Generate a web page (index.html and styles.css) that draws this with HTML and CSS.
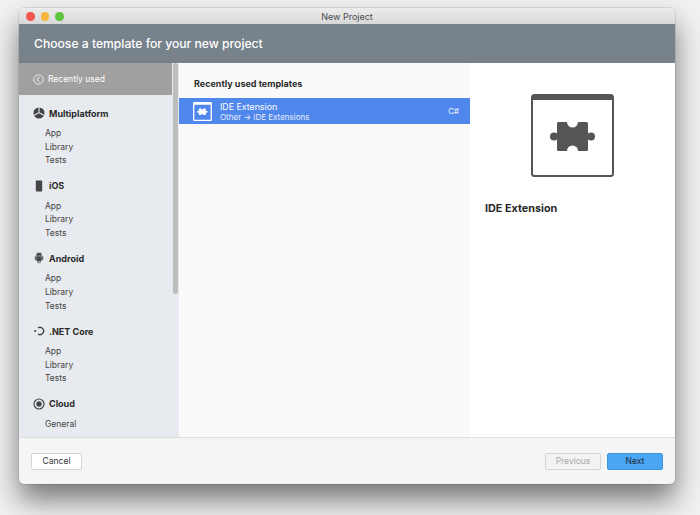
FILE: index.html
```html
<!DOCTYPE html>
<html lang="en">
  <head>
    <meta charset="UTF-8" />
    <title>New Project</title>
    <link rel="stylesheet" href="styles.css">
  </head>
  <body>
    <div class="window">
      <div class="titlebar">
        <div class="lights">
          <span class="light red"></span>
          <span class="light yellow"></span>
          <span class="light green"></span>
        </div>
        <span class="window-title">New Project</span>
      </div>
      <div class="banner">Choose a template for your new project</div>
      <div class="main">
        <div class="sidebar">
          <div class="side-scroll">
            <div class="recent">
              <svg class="recent-icon" viewBox="0 0 14 14">
                <circle cx="7" cy="7" r="6" fill="none" stroke="#fff" stroke-width="1" />
                <path d="M8.200 3.800 5 7l3.200 3.200" fill="none" stroke="#fff" stroke-width="1.200" />
              </svg>
              <span>Recently used</span>
            </div>
            <div class="group">
              <div class="group-head">
                <svg class="group-icon" viewBox="0 0 12 12">
                  <circle cx="6" cy="6" r="5.500" fill="#444" />
                  <path d="M1.400 8.300 6 5.600l4.600 2.700M6 0v5.600" fill="none" stroke="#e6e9ef" stroke-width="1.100" />
                </svg>
                Multiplatform
              </div>
              <div class="item">App</div>
              <div class="item">Library</div>
              <div class="item">Tests</div>
            </div>
            <div class="group">
              <div class="group-head">
                <svg class="group-icon" viewBox="0 0 12 12">
                  <rect x="2.800" y="0.500" width="6.400" height="11" rx="0.800" fill="#444" />
                </svg>
                iOS
              </div>
              <div class="item">App</div>
              <div class="item">Library</div>
              <div class="item">Tests</div>
            </div>
            <div class="group">
              <div class="group-head">
                <svg class="group-icon" viewBox="0 0 12 12">
                  <path d="M3.300 3.600a2.700 2.700 0 0 1 5.400 0zM4 0.400l1 1.400M8 0.400 7 1.800" fill="#444" stroke="#444" stroke-width="0.500" />
                  <path d="M3.300 4.200h5.400v4.700H7.500v2.300H6.500V8.900h-1v2.300h-1V8.900H3.300zM1.800 4.200h1v3.800h-1zM9.200 4.200h1v3.800h-1z" fill="#444" />
                </svg>
                Android
              </div>
              <div class="item">App</div>
              <div class="item">Library</div>
              <div class="item">Tests</div>
            </div>
            <div class="group">
              <div class="group-head">
                <svg class="group-icon" viewBox="0 0 12 12">
                  <path d="M5 2.800a3.700 3.700 0 1 1 0 6.400" fill="none" stroke="#444" stroke-width="1.400" />
                  <circle cx="2.200" cy="6" r="1.100" fill="#444" />
                </svg>
                .NET Core
              </div>
              <div class="item">App</div>
              <div class="item">Library</div>
              <div class="item">Tests</div>
            </div>
            <div class="group">
              <div class="group-head">
                <svg class="group-icon" viewBox="0 0 12 12">
                  <circle cx="6" cy="6" r="5" fill="none" stroke="#444" stroke-width="1.200" />
                  <circle cx="6" cy="6" r="2.700" fill="#444" />
                </svg>
                Cloud
              </div>
              <div class="item">General</div>
            </div>
          </div>
          <div class="scrollbar"><div class="thumb"></div></div>
        </div>
        <div class="templates">
          <div class="templates-title">Recently used templates</div>
          <div class="template-row">
            <svg class="template-icon" viewBox="0 0 83 83">
              <rect x="3" y="3" width="77" height="77" rx="3" fill="none" stroke="#fff" stroke-width="6" />
              <rect x="3" y="3" width="77" height="9" fill="#fff" />
              <path d="M26 28h10a5 5 0 0 0 10 0h10v29H46a5 5 0 0 0-10 0H26z" fill="#fff" />
              <circle cx="22.500" cy="42.500" r="4.500" fill="#fff" />
              <circle cx="59.500" cy="42.500" r="4.500" fill="#fff" />
              <rect x="22" y="39.500" width="38" height="6" fill="#fff" />
            </svg>
            <div class="template-text">
              <div class="template-name">IDE Extension</div>
              <div class="template-path">Other → IDE Extensions</div>
            </div>
            <span class="template-lang">C#</span>
          </div>
        </div>
        <div class="details">
          <svg class="details-icon" viewBox="0 0 83 83">
            <rect x="1" y="1" width="81" height="81" rx="2.500" fill="none" stroke="#555" stroke-width="2" />
            <path d="M1 6V3.500A2.500 2.500 0 0 1 3.500 1h76A2.500 2.500 0 0 1 82 3.500V6z" fill="#555" />
            <path d="M27.500 28h8.500a5 5 0 0 0 11 0h8.500a1.500 1.500 0 0 1 1.500 1.500v26a1.500 1.500 0 0 1-1.500 1.500H47a5 5 0 0 0-11 0h-8.500a1.500 1.500 0 0 1-1.500-1.500v-26a1.500 1.500 0 0 1 1.500-1.500z" fill="#555" />
            <circle cx="23" cy="42.500" r="4" fill="#555" />
            <circle cx="60" cy="42.500" r="4" fill="#555" />
            <rect x="22" y="40" width="39" height="5" fill="#555" />
          </svg>
          <div class="details-name">IDE Extension</div>
        </div>
      </div>
      <div class="footer">
        <button class="btn" type="button">Cancel</button>
        <div class="footer-right">
          <button class="btn btn-disabled" type="button">Previous</button>
          <button class="btn btn-next" type="button">Next</button>
        </div>
      </div>
    </div>
  </body>
</html>
```

FILE: styles.css
```css
html,
body {
  height: 100%;
}
body {
  font-family: Inter, "Liberation Sans", sans-serif;
  background-color: #f1f1f1;
  margin: 0;
  padding: 8px 25px 0 19px;
  box-sizing: border-box;
  overflow: hidden;
}
.window {
  width: 656px;
  height: 476px;
  display: flex;
  flex-direction: column;
  background-color: #f5f5f5;
  border-radius: 5px;
  overflow: hidden;
  box-shadow: 0 16px 28px rgba(0, 0, 0, 0.5), 0 0 0 1px rgba(0, 0, 0, 0.08);
}
.titlebar {
  height: 16px;
  flex: none;
  display: flex;
  align-items: center;
  justify-content: center;
  position: relative;
  background: linear-gradient(#ececec, #d8d8d8);
}
.lights {
  position: absolute;
  left: 7px;
  top: 4px;
  display: flex;
  gap: 6px;
}
.light {
  width: 8.500px;
  height: 8.500px;
  border-radius: 50%;
}
.red {
  background-color: #f25750;
}
.yellow {
  background-color: #f6b73c;
}
.green {
  background-color: #5fc53f;
}
.window-title {
  font-size: 9px;
  color: #4a4a4a;
}
.banner {
  height: 39px;
  flex: none;
  display: flex;
  align-items: center;
  padding-left: 15px;
  background-color: #77828b;
  color: white;
  font-size: 12.150px;
  font-weight: 500;
}
.main {
  height: 375px;
  flex: none;
  display: flex;
  border-bottom: 1px solid #dedede;
  box-sizing: border-box;
}
.sidebar {
  width: 160px;
  flex: none;
  display: flex;
  background-color: #e7eaef;
}
.side-scroll {
  flex: 1;
  overflow: hidden;
}
.recent {
  height: 32px;
  display: flex;
  align-items: center;
  gap: 4px;
  padding-left: 14px;
  background-color: #a0a0a0;
  color: white;
  font-size: 8.500px;
}
.recent-icon {
  width: 11px;
  height: 11px;
}
.group {
  padding-top: 11px;
  margin-bottom: -0.400px;
}
.group-head {
  display: flex;
  align-items: center;
  gap: 4px;
  height: 14px;
  margin-bottom: 7px;
  padding-left: 14px;
  font-size: 9px;
  font-weight: 700;
  color: #2a2a2a;
}
.group-icon {
  width: 12px;
  height: 12px;
}
.item {
  height: 13.700px;
  line-height: 13.700px;
  padding-left: 26px;
  font-size: 8.500px;
  color: #444;
}
.scrollbar {
  width: 7px;
  flex: none;
}
.thumb {
  width: 5px;
  height: 231px;
  margin-left: 1px;
  background-color: #bdbdbd;
  border-radius: 3px;
}
.templates {
  width: 291px;
  flex: none;
  background-color: #fafafa;
}
.templates-title {
  height: 35px;
  padding: 15px 0 0 15px;
  box-sizing: border-box;
  font-size: 9px;
  font-weight: 700;
  color: #2a2a2a;
}
.template-row {
  height: 26px;
  display: flex;
  align-items: center;
  padding: 0 11px 0 14px;
  background-color: #5087ec;
  color: white;
}
.template-icon {
  width: 19px;
  height: 19px;
  margin-right: 8px;
}
.template-text {
  flex: 1;
}
.template-name {
  font-size: 8.800px;
  line-height: 11px;
}
.template-path {
  font-size: 8px;
  line-height: 10px;
  color: #e6edfc;
}
.template-lang {
  font-size: 7.800px;
}
.details {
  flex: 1;
  background-color: white;
  padding: 31px 15px 0;
}
.details-icon {
  display: block;
  width: 83px;
  height: 83px;
  margin: 0 auto 25px;
}
.details-name {
  font-size: 10.800px;
  font-weight: 700;
  color: #2a2a2a;
}
.footer {
  flex: 1;
  display: flex;
  align-items: center;
  justify-content: space-between;
  padding: 0 12px 0 12px;
}
.footer-right {
  display: flex;
  gap: 6px;
}
.btn {
  font-family: inherit;
  width: 51px;
  height: 17px;
  padding: 0;
  font-size: 8.500px;
  background-color: white;
  color: #333;
  border: 1px solid #d4d4d4;
  border-radius: 2px;
}
.btn-disabled {
  width: 56px;
  background-color: #f3f3f3;
  color: #a8a8a8;
}
.btn-next {
  width: 56px;
  background-color: #4aa6f2;
  border-color: #3f95db;
  color: #1d2a38;
}
```
